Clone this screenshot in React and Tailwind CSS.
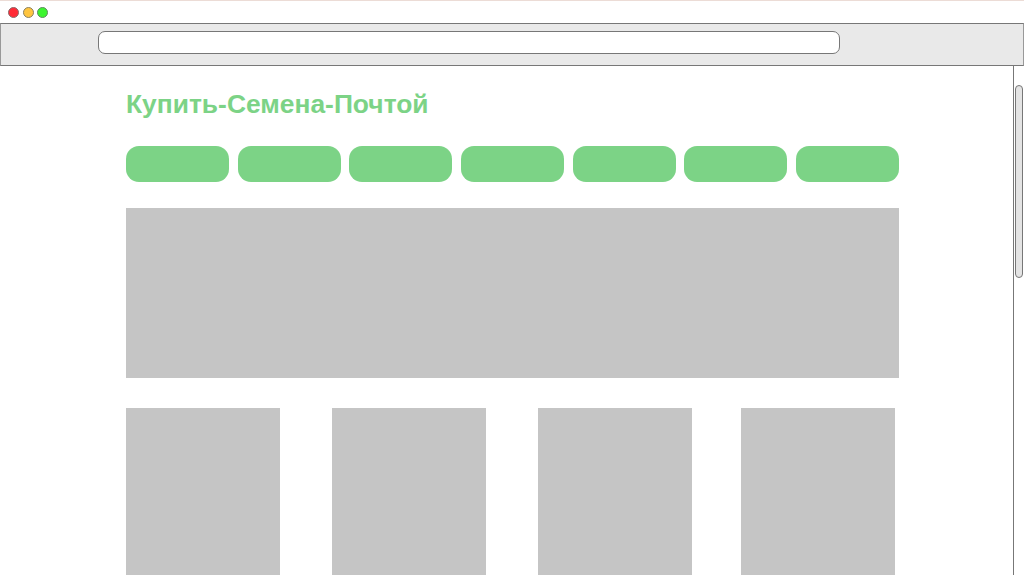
const navItems = [1, 2, 3, 4, 5, 6, 7];

const App = () => {
  return (
    <div className="w-[1024px] h-[575px] overflow-hidden bg-white flex flex-col font-['Liberation_Sans',Arial,sans-serif]">
      {/* title bar */}
      <div className="h-[23px] shrink-0 flex items-start gap-[3.3px] pl-[8.3px] pt-[6px] border-t border-t-[#ecdcd6]">
        <span className="w-[11px] h-[11px] rounded-full bg-[#ff2a36] border border-[#8a6a6a]" />
        <span className="w-[11px] h-[11px] rounded-full bg-[#ffc53f] border border-[#8a8060]" />
        <span className="w-[11px] h-[11px] rounded-full bg-[#3cf52f] border border-[#5f8a5f]" />
      </div>

      {/* toolbar */}
      <div className="h-[43px] shrink-0 bg-[#e9e9e9] border-y border-[#777777] border-x border-x-[#999999] pl-[97px] pt-[7px]">
        <div className="w-[742px] h-[23px] bg-white border border-[#777777] rounded-[7px]" />
      </div>

      <div className="flex-1 min-h-0 flex">
        {/* page */}
        <div className="flex-1 min-w-0 pl-[126px]">
          <h1 className="mt-[24px] h-[28px] text-[26.4px] leading-[28px] font-bold text-[#7cd386]">
            Купить-Семена-Почтой
          </h1>
          <div className="mt-[28px] w-[773px] flex justify-between">
            {navItems.map((item) => (
              <div key={item} className="w-[103px] h-[36px] rounded-[13px] bg-[#7cd386]" />
            ))}
          </div>
          <div className="mt-[26px] w-[773px] h-[170px] bg-[#c5c5c5]" />
          <div className="mt-[30px] flex">
            <div className="w-[154px] h-[200px] shrink-0 bg-[#c5c5c5]" />
            <div className="w-[154px] h-[200px] shrink-0 ml-[52px] bg-[#c5c5c5]" />
            <div className="w-[154px] h-[200px] shrink-0 ml-[52px] bg-[#c5c5c5]" />
            <div className="w-[154px] h-[200px] shrink-0 ml-[49px] bg-[#c5c5c5]" />
          </div>
        </div>

        {/* scrollbar */}
        <div className="w-[11px] shrink-0 border-l border-[#777777] pt-[19px] pl-[1px]">
          <div className="w-[8px] h-[193px] rounded-full bg-[#e4e4e4] border border-[#777777]" />
        </div>
      </div>
    </div>
  );
};

export default App;
